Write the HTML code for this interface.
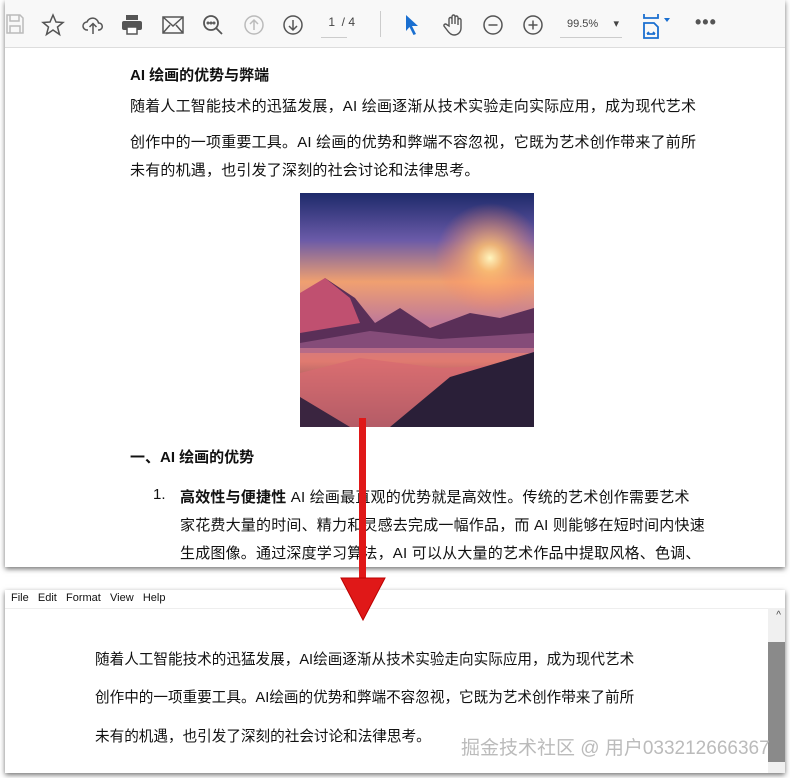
<!DOCTYPE html><html><head><meta charset="utf-8"><style>
body{margin:0;width:790px;height:778px;background:#fff;position:relative;overflow:hidden;font-family:"Liberation Sans","Noto Sans CJK SC",sans-serif;color:#111}
.w1{position:absolute;left:5px;top:0;width:780px;height:567px;background:#fff;box-shadow:0 2px 5px rgba(0,0,0,.55);overflow:hidden}
.tb{height:47px;background:#f8f8f8;border-bottom:1px solid #ddd;position:relative}
.ic{position:absolute;top:13px}
.t{position:absolute;font-size:15px;white-space:nowrap}
.w2{position:absolute;left:5px;top:590px;width:780px;height:183px;background:#fff;box-shadow:0 2px 5px rgba(0,0,0,.55);overflow:hidden}
.b{position:absolute;left:90px;font-size:14.6px;white-space:nowrap;letter-spacing:0}
</style></head><body>
<div class="w1"><div class="tb">
<svg class="ic" style="left:0" width="20" height="22" viewBox="0 0 20 22" fill="none" stroke="#bbb" stroke-width="1.5"><path d="M2 2h13l3 3v15H2z M5 2v6h9V2 M5 20v-7h10v7"/></svg>
<svg class="ic" style="left:36px" width="24" height="24" viewBox="0 0 24 24" fill="none" stroke="#555" stroke-width="1.5"><path d="M12 2l3 7 7 .5-5.5 4.5 2 7.5L12 17l-6.5 4.5 2-7.5L2 9.5 9 9z"/></svg>
<svg class="ic" style="left:76px" width="24" height="24" viewBox="0 0 24 24" fill="none" stroke="#555" stroke-width="1.5"><path d="M7 17H6a4 4 0 010-8 6 6 0 0111.5 1A3.5 3.5 0 0118 17h-1 M12 21v-10 M8.5 14l3.5-3.5 3.5 3.5"/></svg>
<svg class="ic" style="left:115px" width="24" height="24" viewBox="0 0 24 24" fill="#555"><rect x="6" y="2" width="12" height="5"/><rect x="2" y="8" width="20" height="9" rx="2"/><rect x="7" y="14" width="10" height="7" fill="#fff" stroke="#555" stroke-width="1.5"/></svg>
<svg class="ic" style="left:156px" width="24" height="24" viewBox="0 0 24 24" fill="none" stroke="#555" stroke-width="1.5"><rect x="2" y="4" width="20" height="16"/><path d="M2 4l10 9 10-9 M2 20l7-8 M22 20l-7-8"/></svg>
<svg class="ic" style="left:196px" width="24" height="24" viewBox="0 0 24 24" fill="none" stroke="#555" stroke-width="1.8"><circle cx="10" cy="10" r="7"/><path d="M15 15l6 6"/><circle cx="7" cy="10" r=".6"/><circle cx="10" cy="10" r=".6"/><circle cx="13" cy="10" r=".6"/></svg>
<svg class="ic" style="left:237px" width="24" height="24" viewBox="0 0 24 24" fill="none" stroke="#bbb" stroke-width="1.5"><circle cx="12" cy="12" r="9"/><path d="M12 17V7 M8 11l4-4 4 4"/></svg>
<svg class="ic" style="left:276px" width="24" height="24" viewBox="0 0 24 24" fill="none" stroke="#555" stroke-width="1.5"><circle cx="12" cy="12" r="9"/><path d="M12 7v10 M8 13l4 4 4-4"/></svg>
<div style="position:absolute;left:320px;top:15px;font-size:12px;color:#444">&nbsp;1 &nbsp;/ 4</div>
<div style="position:absolute;left:316px;top:37px;width:26px;border-top:1px solid #ccc"></div>
<div style="position:absolute;left:375px;top:11px;height:26px;border-left:1px solid #ccc"></div>
<svg class="ic" style="left:398px" width="20" height="24" viewBox="0 0 20 24"><path d="M3 2l12 11h-6l4 8-2.5 1-4-8L3 18z" fill="#1a6fd0"/></svg>
<svg class="ic" style="left:437px" width="24" height="24" viewBox="0 0 24 24" fill="none" stroke="#555" stroke-width="1.4"><path d="M7 13V6a1.5 1.5 0 013 0v5V3.5a1.5 1.5 0 013 0V11V4.5a1.5 1.5 0 013 0V12V7a1.5 1.5 0 013 0v8c0 4-3 7-7 7-3 0-5-2-7-5l-3-4a1.5 1.5 0 012.5-1.5z"/></svg>
<svg class="ic" style="left:476px" width="24" height="24" viewBox="0 0 24 24" fill="none" stroke="#555" stroke-width="1.5"><circle cx="12" cy="12" r="9"/><path d="M7.5 12h9"/></svg>
<svg class="ic" style="left:516px" width="24" height="24" viewBox="0 0 24 24" fill="none" stroke="#555" stroke-width="1.5"><circle cx="12" cy="12" r="9"/><path d="M7.5 12h9 M12 7.5v9"/></svg>
<div style="position:absolute;left:562px;top:17px;font-size:11px;color:#444">99.5% &nbsp; &nbsp; ▾</div>
<div style="position:absolute;left:555px;top:37px;width:62px;border-top:1px solid #ccc"></div>
<svg class="ic" style="left:637px" width="32" height="26" viewBox="0 0 32 26" fill="none" stroke="#1a6fd0" stroke-width="1.8"><path d="M2 1v4h14V1 M2 25V10h10l4 4v11z M5 21h8 M5 21l2-2 M13 21l-2-2"/><path d="M22 5h6l-3 4z" fill="#1a6fd0" stroke="none"/></svg>
<div style="position:absolute;left:690px;top:12px;font-size:18px;color:#555;letter-spacing:1px;font-weight:bold">•••</div>
</div>
<div class="t" style="left:125px;top:64px;font-weight:bold">AI 绘画的优势与弊端</div>
<div class="t" style="left:125px;top:95px;letter-spacing:.2px">随着人工智能技术的迅猛发展，AI 绘画逐渐从技术实验走向实际应用，成为现代艺术</div>
<div class="t" style="left:125px;top:131px;letter-spacing:.2px">创作中的一项重要工具。AI 绘画的优势和弊端不容忽视，它既为艺术创作带来了前所</div>
<div class="t" style="left:125px;top:159px;letter-spacing:.2px">未有的机遇，也引发了深刻的社会讨论和法律思考。</div>
<svg style="position:absolute;left:295px;top:193px" width="234" height="234" viewBox="0 0 234 234">
<defs><linearGradient id="s" x1="0" y1="0" x2="0" y2="1"><stop offset="0" stop-color="#1d2a6a"/><stop offset=".2" stop-color="#6a5aa8"/><stop offset=".38" stop-color="#f0a070"/><stop offset=".55" stop-color="#c07a98"/><stop offset=".72" stop-color="#e07a70"/><stop offset="1" stop-color="#2a2440"/></linearGradient>
<radialGradient id="sun" cx="190" cy="65" r="55" gradientUnits="userSpaceOnUse"><stop offset="0" stop-color="#fff6c0"/><stop offset=".25" stop-color="#ffc070" stop-opacity=".85"/><stop offset="1" stop-color="#ff8060" stop-opacity="0"/></radialGradient></defs>
<rect width="234" height="234" fill="url(#s)"/><rect width="234" height="234" fill="url(#sun)"/>
<path d="M0 110l25-25 30 20 20 25 25-15 30 20 40-15 30 5 34-10v40H0z" fill="#5a2f58"/>
<path d="M0 100l25-15 25 20 10 25-60 10z" fill="#c05070"/>
<path d="M0 150l70-12 70 8 94-6v20H0z" fill="#a26090" opacity=".6"/>
<path d="M0 180l60-15 80 10 94-5v64H0z" fill="#d76a70" opacity=".8"/>
<path d="M90 234l60-50 84-25v75z" fill="#2a1f38"/><path d="M0 234l0-30 50 30z" fill="#3a2540"/>
</svg>
<div class="t" style="left:125px;top:446px;font-weight:bold">一、AI 绘画的优势</div>
<div class="t" style="left:148px;top:486px">1.</div>
<div class="t" style="left:175px;top:486px;letter-spacing:.2px"><b>高效性与便捷性</b> AI 绘画最直观的优势就是高效性。传统的艺术创作需要艺术</div>
<div class="t" style="left:175px;top:514px;letter-spacing:.2px">家花费大量的时间、精力和灵感去完成一幅作品，而 AI 则能够在短时间内快速</div>
<div class="t" style="left:175px;top:542px;letter-spacing:.2px">生成图像。通过深度学习算法，AI 可以从大量的艺术作品中提取风格、色调、</div>
</div>
<div class="w2">
<div style="position:absolute;left:6px;top:2px;font-size:11px">File &nbsp; Edit &nbsp; Format &nbsp; View &nbsp; Help</div>
<div style="position:absolute;left:0;top:18px;width:780px;border-top:1px solid #eee"></div>
<div style="position:absolute;right:0;top:18px;width:17px;height:165px;background:#f0f0f0"></div>
<div style="position:absolute;right:0;top:52px;width:17px;height:120px;background:#8a8a8a"></div>
<div style="position:absolute;right:4px;top:20px;font-size:10px;color:#444">^</div>
<div class="b" style="top:58px">随着人工智能技术的迅猛发展，AI绘画逐渐从技术实验走向实际应用，成为现代艺术</div>
<div class="b" style="top:96px">创作中的一项重要工具。AI绘画的优势和弊端不容忽视，它既为艺术创作带来了前所</div>
<div class="b" style="top:135px">未有的机遇，也引发了深刻的社会讨论和法律思考。</div>
<div style="position:absolute;left:456px;top:143px;font-size:19px;color:#bbb;letter-spacing:0">掘金技术社区 @ 用户033212666367</div>
</div>
<svg style="position:absolute;left:335px;top:418px" width="56" height="206" viewBox="0 0 56 206">
<rect x="24" y="0" width="7" height="165" fill="#e01818"/><path d="M6 160h44l-22 42z" fill="#e01818" stroke="#b00" stroke-width="1"/></svg>
</body></html>
